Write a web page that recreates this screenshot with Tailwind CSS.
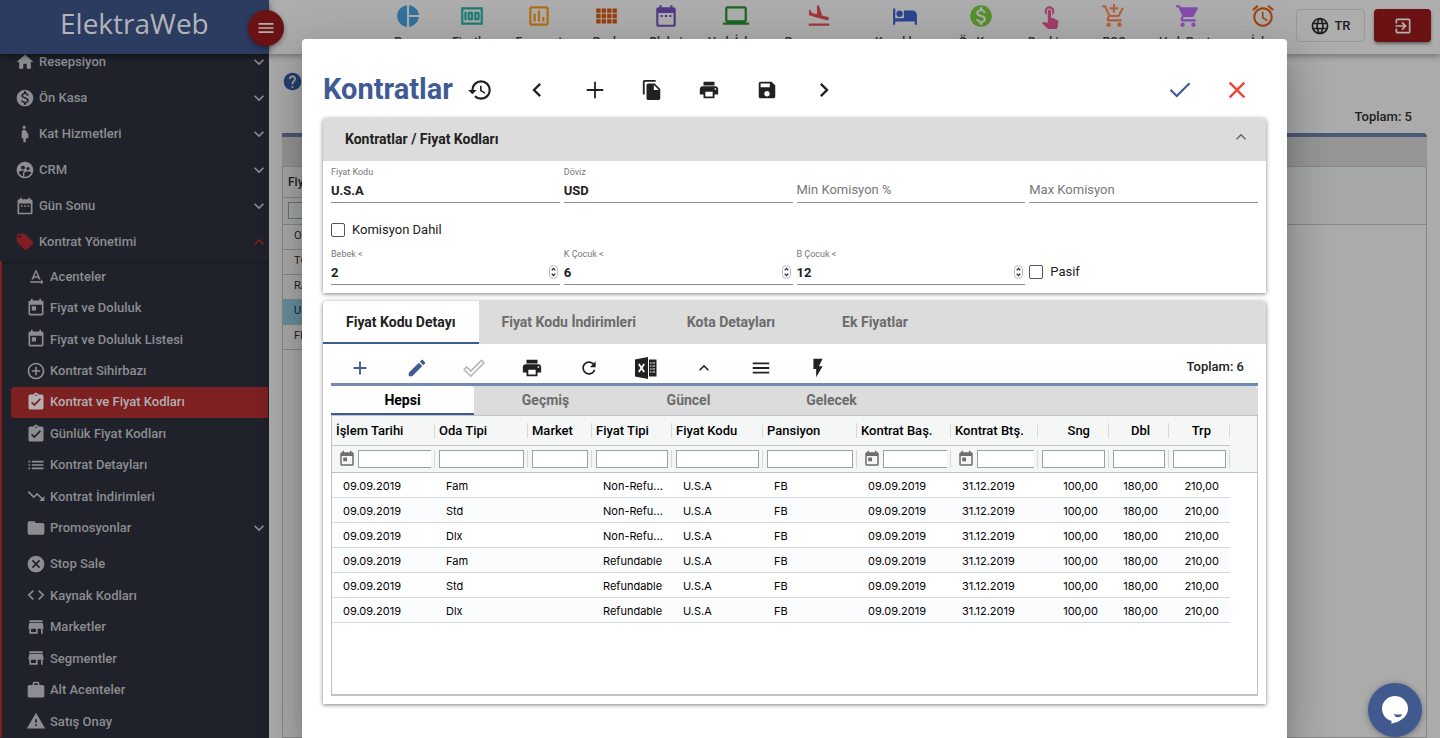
<!DOCTYPE html>
<html lang="tr">
<head>
<meta charset="utf-8">
<title>ElektraWeb - Kontratlar</title>
<meta name="viewport" content="width=device-width, initial-scale=1">
<script src="https://cdn.jsdelivr.net/npm/@tailwindcss/browser@4"></script>
</head>
<body class="relative h-screen overflow-hidden bg-[#ababab] font-['Roboto',sans-serif] text-[13px] text-[#212121]">

<!-- Icon library -->
<svg class="hidden" aria-hidden="true">
  <symbol id="i-home" viewBox="0 0 24 24"><path d="M10 20v-6h4v6h5v-8h3L12 3 2 12h3v8z"/></symbol>
  <symbol id="i-money" viewBox="0 0 24 24"><path d="M12 2C6.48 2 2 6.48 2 12s4.48 10 10 10 10-4.48 10-10S17.52 2 12 2zm1.41 16.09V20h-2.67v-1.93c-1.71-.36-3.16-1.46-3.27-3.4h1.96c.1 1.05.82 1.87 2.65 1.87 1.96 0 2.4-.98 2.4-1.59 0-.83-.44-1.61-2.67-2.14-2.48-.6-4.18-1.62-4.18-3.67 0-1.72 1.39-2.84 3.11-3.21V4h2.67v1.95c1.86.45 2.79 1.86 2.85 3.39H14.3c-.05-1.11-.64-1.87-2.22-1.87-1.5 0-2.4.68-2.4 1.64 0 .84.65 1.39 2.67 1.91s4.18 1.39 4.18 3.91c-.01 1.83-1.38 2.83-3.12 3.16z"/></symbol>
  <symbol id="i-woman" viewBox="0 0 24 24"><path d="M9 4c0-1.11.89-2 2-2s2 .89 2 2-.89 2-2 2-2-.89-2-2zm7 9c-.01-1.34-.83-2.51-2-3 0-1.66-1.34-3-3-3s-3 1.34-3 3v7h2v5h3v-5h3v-4z"/></symbol>
  <symbol id="i-users" viewBox="0 0 24 24"><path d="M11.99 2c-5.52 0-10 4.48-10 10s4.48 10 10 10 10-4.48 10-10-4.48-10-10-10zm3.61 6.34c1.07 0 1.93.86 1.93 1.93 0 1.07-.86 1.93-1.93 1.93-1.07 0-1.93-.86-1.93-1.93-.01-1.07.86-1.93 1.93-1.93zm-6-1.58c1.3 0 2.36 1.06 2.36 2.36 0 1.3-1.06 2.36-2.36 2.36s-2.36-1.06-2.36-2.36c0-1.31 1.05-2.36 2.36-2.36zm0 9.13v3.75c-2.4-.75-4.3-2.6-5.14-4.96 1.05-1.12 3.67-1.69 5.14-1.69.53 0 1.2.08 1.9.22-1.64.87-1.9 2.02-1.9 2.68zM11.99 20c-.27 0-.53-.01-.79-.04v-4.07c0-1.42 2.94-2.13 4.4-2.13 1.07 0 2.92.39 3.84 1.15-1.17 2.97-4.06 5.09-7.45 5.09z"/></symbol>
  <symbol id="i-range" viewBox="0 0 24 24"><path d="M9 11H7v2h2v-2zm4 0h-2v2h2v-2zm4 0h-2v2h2v-2zm2-7h-1V2h-2v2H8V2H6v2H5c-1.11 0-1.99.9-1.99 2L3 20c0 1.1.89 2 2 2h14c1.1 0 2-.9 2-2V6c0-1.1-.9-2-2-2zm0 16H5V9h14v11z"/></symbol>
  <symbol id="i-tag" viewBox="0 0 24 24"><path d="M21.41 11.58l-9-9C12.05 2.22 11.55 2 11 2H4c-1.1 0-2 .9-2 2v7c0 .55.22 1.05.59 1.42l9 9c.36.36.86.58 1.41.58.55 0 1.05-.22 1.41-.59l7-7c.37-.36.59-.86.59-1.41 0-.55-.23-1.06-.59-1.42zM5.5 7C4.67 7 4 6.33 4 5.5S4.67 4 5.5 4 7 4.67 7 5.5 6.33 7 5.5 7z"/></symbol>
  <symbol id="i-text" viewBox="0 0 24 24"><path d="M21 18l-3-3v2H5v2h13v2l3-3zM9.5 12.8h5l.9 2.2h2.1L12.75 4h-1.5L6.5 15h2.1l.9-2.2zM12 5.98L13.87 11h-3.74L12 5.98z"/></symbol>
  <symbol id="i-today" viewBox="0 0 24 24"><path d="M19 3h-1V1h-2v2H8V1H6v2H5c-1.11 0-1.99.9-1.99 2L3 19c0 1.1.89 2 2 2h14c1.1 0 2-.9 2-2V5c0-1.1-.9-2-2-2zm0 16H5V8h14v11zM7 10h5v5H7z"/></symbol>
  <symbol id="i-addcircle" viewBox="0 0 24 24"><path d="M13 7h-2v4H7v2h4v4h2v-4h4v-2h-4V7zm-1-5C6.48 2 2 6.48 2 12s4.48 10 10 10 10-4.48 10-10S17.52 2 12 2zm0 18c-4.41 0-8-3.59-8-8s3.59-8 8-8 8 3.59 8 8-3.59 8-8 8z"/></symbol>
  <symbol id="i-assign" viewBox="0 0 24 24"><path d="M19 3h-4.18C14.4 1.84 13.3 1 12 1c-1.3 0-2.4.84-2.82 2H5c-1.1 0-2 .9-2 2v14c0 1.1.9 2 2 2h14c1.1 0 2-.9 2-2V5c0-1.1-.9-2-2-2zm-7 0c.55 0 1 .45 1 1s-.45 1-1 1-1-.45-1-1 .45-1 1-1zm-2 14l-4-4 1.41-1.41L10 14.17l6.59-6.59L18 9l-8 8z"/></symbol>
  <symbol id="i-list" viewBox="0 0 24 24"><path d="M3 13h2v-2H3v2zm0 4h2v-2H3v2zm0-8h2V7H3v2zm4 4h14v-2H7v2zm0 4h14v-2H7v2zM7 7v2h14V7H7z"/></symbol>
  <symbol id="i-trend" viewBox="0 0 24 24"><path d="M16 18l2.29-2.29-4.88-4.88-4 4L2 7.41 3.41 6l6 6 4-4 6.3 6.29L22 12v6z"/></symbol>
  <symbol id="i-folder" viewBox="0 0 24 24"><path d="M10 4H4c-1.1 0-1.99.9-1.99 2L2 18c0 1.1.9 2 2 2h16c1.1 0 2-.9 2-2V8c0-1.1-.9-2-2-2h-8l-2-2z"/></symbol>
  <symbol id="i-cancel" viewBox="0 0 24 24"><path d="M12 2C6.47 2 2 6.47 2 12s4.47 10 10 10 10-4.47 10-10S17.53 2 12 2zm5 13.59L15.59 17 12 13.41 8.41 17 7 15.59 10.59 12 7 8.41 8.41 7 12 10.59 15.59 7 17 8.41 13.41 12 17 15.59z"/></symbol>
  <symbol id="i-code" viewBox="0 0 24 24"><path d="M9.4 16.6L4.8 12l4.6-4.6L8 6l-6 6 6 6 1.4-1.4zm5.2 0l4.6-4.6-4.6-4.6L16 6l6 6-6 6-1.4-1.4z"/></symbol>
  <symbol id="i-store" viewBox="0 0 24 24"><path d="M20 4H4v2h16V4zm1 10v-2l-1-5H4l-1 5v2h1v6h10v-6h4v6h2v-6h1zm-9 4H6v-4h6v4z"/></symbol>
  <symbol id="i-work" viewBox="0 0 24 24"><path d="M20 6h-4V4c0-1.11-.89-2-2-2h-4c-1.11 0-2 .89-2 2v2H4c-1.11 0-1.99.89-1.99 2L2 19c0 1.11.89 2 2 2h16c1.11 0 2-.89 2-2V8c0-1.11-.89-2-2-2zm-6 0h-4V4h4v2z"/></symbol>
  <symbol id="i-warn" viewBox="0 0 24 24"><path d="M1 21h22L12 2 1 21zm12-3h-2v-2h2v2zm0-4h-2v-4h2v4z"/></symbol>
  <symbol id="i-down" viewBox="0 0 24 24"><path d="M16.59 8.59L12 13.17 7.41 8.59 6 10l6 6 6-6z"/></symbol>
  <symbol id="i-up" viewBox="0 0 24 24"><path d="M12 8l-6 6 1.41 1.41L12 10.83l4.59 4.58L18 14z"/></symbol>
  <symbol id="i-menu" viewBox="0 0 24 24"><path d="M3 18h18v-2H3v2zm0-5h18v-2H3v2zm0-7v2h18V6H3z"/></symbol>
  <symbol id="i-print" viewBox="0 0 24 24"><path d="M19 8H5c-1.66 0-3 1.34-3 3v6h4v4h12v-4h4v-6c0-1.66-1.34-3-3-3zm-3 11H8v-5h8v5zm3-7c-.55 0-1-.45-1-1s.45-1 1-1 1 .45 1 1-.45 1-1 1zm-1-9H6v4h12V3z"/></symbol>
  <symbol id="i-spin" viewBox="0 0 9 14"><rect x=".5" y=".5" width="8" height="13" rx="4" fill="#fff" stroke="#bbb"/><path d="M2.7 5.4L4.5 3.4l1.8 2M2.7 8.6l1.8 2 1.8-2" fill="none" stroke="#222" stroke-width="1.2"/></symbol>
</svg>

<!-- Page behind the dialog -->
<div class="flex h-full">
  <aside class="flex w-[269px] shrink-0 flex-col bg-[#1f222b] text-[#8c8d90]">
    <header class="relative z-10 flex h-[54px] shrink-0 items-center bg-[#2c3b60] pb-2 pl-[60px] shadow-[0_2px_6px_rgba(0,0,0,0.5)]">
      <span class="font-['Open_Sans',sans-serif] text-[28px] leading-none font-medium text-[#b2b4b8]">ElektraWeb</span>
    </header>
    <nav class="-mt-[10px] font-medium">
      <ul class="[&>li>a]:flex [&>li>a]:h-9 [&>li>a]:items-center [&>li>a]:gap-1 [&>li>a]:pl-[15px] [&_svg]:size-5 [&_svg]:shrink-0 [&_svg]:fill-current">
        <li><a href="#"><svg><use href="#i-home"/></svg><span class="flex-1">Resepsiyon</span><svg><use href="#i-down"/></svg></a></li>
        <li><a href="#"><svg><use href="#i-money"/></svg><span class="flex-1">Ön Kasa</span><svg><use href="#i-down"/></svg></a></li>
        <li><a href="#"><svg><use href="#i-woman"/></svg><span class="flex-1">Kat Hizmetleri</span><svg><use href="#i-down"/></svg></a></li>
        <li><a href="#"><svg><use href="#i-users"/></svg><span class="flex-1">CRM</span><svg><use href="#i-down"/></svg></a></li>
        <li><a href="#"><svg><use href="#i-range"/></svg><span class="flex-1">Gün Sonu</span><svg><use href="#i-down"/></svg></a></li>
        <li><a href="#"><svg class="text-[#7f1f21]"><use href="#i-tag"/></svg><span class="flex-1">Kontrat Yönetimi</span><svg class="text-[#7f1f21]"><use href="#i-up"/></svg></a></li>
      </ul>
      <div class="mt-px border-l-2 border-[#7f1f21] shadow-[inset_0_3px_3px_rgba(0,0,0,0.15)] [&_a]:ml-[9px] [&_a]:flex [&_a]:items-center [&_a]:gap-1 [&_a]:pl-[15px] [&_svg]:size-5 [&_svg]:shrink-0 [&_svg]:fill-current">
        <ul class="grid h-[251px] auto-rows-fr [&_a]:h-full">
          <li><a href="#"><svg><use href="#i-text"/></svg>Acenteler</a></li>
          <li><a href="#"><svg><use href="#i-today"/></svg>Fiyat ve Doluluk</a></li>
          <li><a href="#"><svg><use href="#i-today"/></svg>Fiyat ve Doluluk Listesi</a></li>
          <li><a href="#"><svg><use href="#i-addcircle"/></svg>Kontrat Sihirbazı</a></li>
          <li><a href="#" aria-current="page" class="mr-px rounded-l bg-[#7c2022] text-[#b5b0b0]"><svg><use href="#i-assign"/></svg>Kontrat ve Fiyat Kodları</a></li>
          <li><a href="#"><svg><use href="#i-assign"/></svg>Günlük Fiyat Kodları</a></li>
          <li><a href="#"><svg><use href="#i-list"/></svg>Kontrat Detayları</a></li>
          <li><a href="#"><svg><use href="#i-trend"/></svg>Kontrat İndirimleri</a></li>
        </ul>
        <a href="#" class="h-9 pb-1"><svg><use href="#i-folder"/></svg><span class="flex-1">Promosyonlar</span><svg><use href="#i-down"/></svg></a>
        <ul class="grid h-[189px] auto-rows-fr [&_a]:h-full">
          <li><a href="#"><svg><use href="#i-cancel"/></svg>Stop Sale</a></li>
          <li><a href="#"><svg><use href="#i-code"/></svg>Kaynak Kodları</a></li>
          <li><a href="#"><svg><use href="#i-store"/></svg>Marketler</a></li>
          <li><a href="#"><svg><use href="#i-store"/></svg>Segmentler</a></li>
          <li><a href="#"><svg><use href="#i-work"/></svg>Alt Acenteler</a></li>
          <li><a href="#"><svg><use href="#i-warn"/></svg>Satış Onay</a></li>
        </ul>
      </div>
    </nav>
  </aside>

  <div class="flex min-w-0 flex-1 flex-col">
    <header class="flex h-[54px] shrink-0 items-start bg-[#adadad] pr-[9px] pl-[108px] shadow-[0_2px_6px_rgba(0,0,0,0.35)]">
      <nav class="flex flex-1 pt-[3px] text-center text-xs font-medium whitespace-nowrap text-[#2b2b2b] [&_a]:flex [&_a]:flex-col [&_a]:items-center [&_a]:gap-[5px] [&_svg]:size-[26px] [&_svg]:fill-current">
        <a href="#" class="w-[62px]"><svg viewBox="0 0 24 24" class="text-[#31719d]"><path d="M11 2v20c-5.07-.5-9-4.79-9-10s3.93-9.5 9-10zm2.03 0v8.99H22c-.47-4.74-4.24-8.52-8.97-8.99zm0 11.01V22c4.74-.47 8.5-4.25 8.97-8.99h-8.97z"/></svg>Pano</a>
        <a href="#" class="w-[66px]"><svg viewBox="0 0 24 24" class="text-[#1a7c76]"><path d="M5 8h2v8H5zm7 0H9c-.55 0-1 .45-1 1v6c0 .55.45 1 1 1h3c.55 0 1-.45 1-1V9c0-.55-.45-1-1-1zm-1 6h-1v-4h1v4zm7-6h-3c-.55 0-1 .45-1 1v6c0 .55.45 1 1 1h3c.55 0 1-.45 1-1V9c0-.55-.45-1-1-1zm-1 6h-1v-4h1v4zM2 4v16h20V4H2zm2 14V6h16v12H4z"/></svg>Fiyatlar</a>
        <a href="#" class="w-[68px]"><svg viewBox="0 0 24 24" class="text-[#b26c15]"><path d="M9 17H7v-7h2v7zm4 0h-2V7h2v10zm4 0h-2v-4h2v4zm2 2H5V5h14v14zm0-16H5c-1.1 0-2 .9-2 2v14c0 1.1.9 2 2 2h14c1.1 0 2-.9 2-2V5c0-1.1-.9-2-2-2z"/></svg>Forecast</a>
        <a href="#" class="w-[66px]"><svg viewBox="0 0 24 24" class="text-[#983e0c]"><path d="M3 9h4V5H3v4zm0 5h4v-4H3v4zm5 0h4v-4H8v4zm5 0h4v-4h-4v4zM8 9h4V5H8v4zm5-4v4h4V5h-4zm5 9h4v-4h-4v4zM3 19h4v-4H3v4zm5 0h4v-4H8v4zm5 0h4v-4h-4v4zm5 0h4v-4h-4v4zm0-14v4h4V5h-4z"/></svg>Rack</a>
        <a href="#" class="w-[54px]"><svg viewBox="0 0 24 24" class="text-[#523a86]"><use href="#i-range"/><path d="M4 5h16v4H4z"/></svg>Blokaj</a>
        <a href="#" class="w-[86px]"><svg viewBox="0 0 24 24" class="text-[#1d641f]"><path d="M20 18c1.1 0 1.99-.9 1.99-2L22 5c0-1.1-.9-2-2-2H4c-1.1 0-2 .9-2 2v11c0 1.1.9 2 2 2H0v2h24v-2h-4zM4 5h16v11H4V5z"/></svg>Hızlı İşlem</a>
        <a href="#" class="w-20"><svg viewBox="0 0 24 24" class="text-[#a0373b]"><path d="M2.5 19h19v2h-19zm7.18-5.73l4.35 1.16 5.31 1.42c.8.21 1.62-.26 1.84-1.06.21-.8-.26-1.62-1.06-1.84l-5.31-1.42-2.76-9.02L10.12 2v8.28L5.15 8.95l-.93-2.32-1.45-.39v5.17l1.6.43 5.31 1.43z"/></svg>Rezervasyon</a>
        <a href="#" class="w-[92px]"><svg viewBox="0 0 24 24" class="text-[#2a4690]"><path d="M7 13c1.66 0 3-1.34 3-3S8.66 7 7 7s-3 1.34-3 3 1.34 3 3 3zm12-6h-8v7H3V5H1v15h2v-3h18v3h2v-9c0-2.21-1.79-4-4-4z"/></svg>Konaklama</a>
        <a href="#" class="w-[60px]"><svg class="text-[#57902b]"><use href="#i-money"/></svg>Ön Kasa</a>
        <a href="#" class="w-[78px]"><svg viewBox="0 0 24 24" class="text-[#a0406b]"><path d="M9 11.24V7.5C9 6.12 10.12 5 11.5 5S14 6.12 14 7.5v3.74c1.21-.81 2-2.18 2-3.74C16 5.01 13.99 3 11.5 3S7 5.01 7 7.5c0 1.56.79 2.93 2 3.74zm9.84 4.63l-4.54-2.26c-.17-.07-.35-.11-.54-.11H13v-6c0-.83-.67-1.5-1.5-1.5S10 6.67 10 7.5v10.74l-3.43-.72c-.08-.01-.15-.03-.24-.03-.31 0-.59.13-.79.33l-.79.8 4.94 4.94c.27.27.65.44 1.06.44h6.79c.75 0 1.33-.55 1.44-1.28l.75-5.27c.01-.07.02-.14.02-.2 0-.62-.38-1.16-.91-1.38z"/></svg>Booking</a>
        <a href="#" class="w-[50px]"><svg viewBox="0 0 24 24" class="text-[#b4603d]"><path d="M11 9h2V6h3V4h-3V1h-2v3H8v2h3v3zm-4 9c-1.1 0-1.99.9-1.99 2S5.9 22 7 22s2-.9 2-2-.9-2-2-2zm10 0c-1.1 0-1.99.9-1.99 2s.89 2 1.99 2 2-.9 2-2-.9-2-2-2zm-9.83-3.25l.03-.12.9-1.63h7.45c.75 0 1.41-.41 1.75-1.03l3.86-7.01L19.42 4h-.01l-1.1 2-2.76 5H8.53l-.13-.27L6.16 6l-.95-2-.94-2H1v2h2l3.6 7.59-1.35 2.45c-.16.28-.25.61-.25.96 0 1.1.9 2 2 2h12v-2H7.42c-.13 0-.25-.11-.25-.25z"/></svg>POS</a>
        <a href="#" class="w-[98px]"><svg viewBox="0 0 24 24" class="text-[#854bb0]"><path d="M7 18c-1.1 0-1.99.9-1.99 2S5.9 22 7 22s2-.9 2-2-.9-2-2-2zM1 2v2h2l3.6 7.59-1.35 2.45c-.16.28-.25.61-.25.96 0 1.1.9 2 2 2h12v-2H7.42c-.14 0-.25-.11-.25-.25l.03-.12.9-1.63h7.45c.75 0 1.41-.41 1.75-1.03l3.58-6.49c.08-.14.12-.31.12-.48 0-.55-.45-1-1-1H5.21l-.94-2H1zm16 16c-1.1 0-1.99.9-1.99 2s.89 2 1.99 2 2-.9 2-2-.9-2-2-2z"/></svg>Hızlı Posta</a>
        <a href="#" class="w-[52px]"><svg viewBox="0 0 24 24" class="text-[#a14413]"><path d="M22 5.72l-4.6-3.86-1.29 1.53 4.6 3.86L22 5.72zM7.88 3.39L6.6 1.86 2 5.71l1.29 1.53 4.59-3.85zM12.5 8H11v6l4.75 2.85.75-1.23-4-2.37V8zM12 4c-4.97 0-9 4.03-9 9s4.02 9 9 9c4.97 0 9-4.03 9-9s-4.03-9-9-9zm0 16c-3.87 0-7-3.13-7-7s3.13-7 7-7 7 3.13 7 7-3.13 7-7 7z"/></svg>İşler</a>
      </nav>
      <div class="flex gap-[9px] pt-[9px]">
        <button class="flex h-[33px] w-[69px] items-center justify-center gap-1 rounded border border-[#989898] text-[13px] font-medium text-[#1d1d1d]"><svg viewBox="0 0 24 24" class="size-5 fill-current"><path d="M11.99 2C6.47 2 2 6.48 2 12s4.47 10 9.99 10C17.52 22 22 17.52 22 12S17.52 2 11.99 2zm6.93 6h-2.95c-.32-1.25-.78-2.45-1.38-3.56 1.84.63 3.37 1.91 4.33 3.56zM12 4.04c.83 1.2 1.48 2.53 1.91 3.96h-3.82c.43-1.43 1.08-2.76 1.91-3.96zM4.26 14C4.1 13.36 4 12.69 4 12s.1-1.36.26-2h3.38c-.08.66-.14 1.32-.14 2 0 .68.06 1.34.14 2H4.26zm.82 2h2.95c.32 1.25.78 2.45 1.38 3.56-1.84-.63-3.37-1.9-4.33-3.56zm2.95-8H5.08c.96-1.66 2.49-2.93 4.33-3.56C8.81 5.55 8.35 6.75 8.03 8zM12 19.96c-.83-1.2-1.48-2.53-1.91-3.96h3.82c-.43 1.43-1.08 2.76-1.91 3.96zM14.34 14H9.66c-.09-.66-.16-1.32-.16-2 0-.68.07-1.35.16-2h4.68c.09.65.16 1.32.16 2 0 .68-.07 1.34-.16 2zm.25 5.56c.6-1.11 1.06-2.31 1.38-3.56h2.95c-.96 1.65-2.49 2.93-4.33 3.56zM16.36 14c.08-.66.14-1.32.14-2 0-.68-.06-1.34-.14-2h3.38c.16.64.26 1.31.26 2s-.1 1.36-.26 2h-3.38z"/></svg>TR</button>
        <button aria-label="Çıkış" class="flex h-[33px] w-[57px] items-center justify-center rounded bg-[#6b1214] text-[#b5aeae] shadow-[0_2px_3px_rgba(0,0,0,0.4)]"><svg viewBox="0 0 24 24" class="size-5 fill-current"><path d="M10.09 15.59L11.5 17l5-5-5-5-1.41 1.41L12.67 11H3v2h9.67l-2.58 2.59zM19 3H5c-1.11 0-2 .9-2 2v4h2V5h14v14H5v-4H3v4c0 1.1.89 2 2 2h14c1.1 0 2-.9 2-2V5c0-1.1-.9-2-2-2z"/></svg></button>
      </div>
    </header>

    <main class="flex min-h-0 flex-1 flex-col px-[13px]">
      <div class="flex h-[79px] items-center justify-between">
        <button aria-label="Yardım" class="mb-6 text-[#273f70]"><svg viewBox="0 0 24 24" class="size-[21px] fill-current"><path d="M12 2C6.48 2 2 6.48 2 12s4.48 10 10 10 10-4.48 10-10S17.52 2 12 2zm1 17h-2v-2h2v2zm2.07-7.75l-.9.92C13.45 12.9 13 13.5 13 15h-2v-.5c0-1.1.45-2.1 1.17-2.83l1.24-1.26c.37-.36.59-.86.59-1.41 0-1.1-.9-2-2-2s-2 .9-2 2H8c0-2.21 1.79-4 4-4s4 1.79 4 4c0 .88-.36 1.68-.93 2.25z"/></svg></button>
        <p class="mt-[46px] mr-[15px] font-medium">Toplam: 5</p>
      </div>
      <div class="h-[33px] rounded-tr border-t-4 border-[#4c5a77] bg-[#969696]"></div>
      <div class="flex-1 border border-[#848889]">
        <table class="w-full table-fixed border-collapse text-left text-[11px] [&_tbody_td:first-child]:border-b [&_tbody_td:first-child]:border-[#848889] [&_tbody_td]:pl-[11px]">
          <colgroup><col class="w-40"><col></colgroup>
          <thead class="border-b border-[#848889] bg-[#a5a8a7]">
            <tr class="h-[30px]"><th scope="col" class="border-b border-[#848889] pl-[5px] text-xs font-medium">Fiyat Kodu</th><td></td></tr>
            <tr class="h-[27px]"><td class="pl-[5px]"><input aria-label="Fiyat Kodu filtresi" class="block h-[17px] w-20 border border-[#6a7474]"></td><td></td></tr>
          </thead>
          <tbody>
            <tr class="h-[25px]"><td>OTA</td><td></td></tr>
            <tr class="h-[25px]"><td>TO</td><td></td></tr>
            <tr class="h-[25px]"><td>RACK</td><td></td></tr>
            <tr class="h-[25px]"><td class="bg-[#67909f] text-[#0e1c33]">U.S.A</td><td></td></tr>
            <tr class="h-[25px]"><td>FIT</td><td></td></tr>
          </tbody>
        </table>
      </div>
    </main>
  </div>
</div>

<!-- Menu toggle, straddling the sidebar edge -->
<button aria-label="Menü" class="absolute top-[10px] left-[248px] z-10 flex size-9 items-center justify-center rounded-full bg-[#6b1214] text-[#b5aeae] shadow-[0_2px_5px_rgba(0,0,0,0.4)]"><svg class="size-5 fill-current"><use href="#i-menu"/></svg></button>

<!-- Dialog -->
<section role="dialog" aria-label="Kontratlar" class="absolute top-[39px] right-[153px] bottom-0 left-[302px] z-20 overflow-hidden rounded-t bg-white px-[21px] pt-6 shadow-[0_11px_15px_-7px_rgba(0,0,0,0.2),0_24px_38px_3px_rgba(0,0,0,0.14),0_9px_46px_8px_rgba(0,0,0,0.12)]">
  <div class="flex h-[55px] items-center pb-[2px] [&_button]:flex [&_button]:items-center [&_button]:justify-center [&_svg]:size-[22px] [&_svg]:fill-current">
    <h1 class="text-[29px] leading-none font-bold text-[#3f5b93]">Kontratlar</h1>
    <button aria-label="Geçmiş" class="ml-[14px]"><svg viewBox="0 2 24 20" class="size-[26px]!"><path d="M13.5 8H12v5l4.28 2.54.72-1.21-3.5-2.08V8M13 3a9 9 0 0 0-9 9H1l3.96 4.03L9 12H6a7 7 0 0 1 7-7 7 7 0 0 1 7 7 7 7 0 0 1-7 7c-1.93 0-3.68-.79-4.94-2.06l-1.42 1.42A8.9 8.9 0 0 0 13 21a9 9 0 0 0 9-9 9 9 0 0 0-9-9"/></svg></button>
    <div class="ml-4 flex w-[344px] [&_button]:flex-1">
      <button aria-label="Önceki"><svg viewBox="0 0 24 24" class="size-7!"><path d="M15.41 7.41L14 6l-6 6 6 6 1.41-1.41L10.83 12z"/></svg></button>
      <button aria-label="Yeni"><svg viewBox="0 0 24 24" class="fill-none! stroke-current stroke-2"><path d="M3 12h18M12 3v18"/></svg></button>
      <button aria-label="Kopyala"><svg viewBox="0 0 24 24"><path d="M16 1H4c-1.1 0-2 .9-2 2v14h2V3h12V1zm-1 4l6 6v10c0 1.1-.9 2-2 2H7.99C6.89 23 6 22.1 6 21l.01-14c0-1.1.89-2 1.99-2h7zm-1 7h5.5L14 6.5V12z"/></svg></button>
      <button aria-label="Yazdır"><svg><use href="#i-print"/></svg></button>
      <button aria-label="Kaydet"><svg viewBox="0 0 24 24"><path d="M17 3H5c-1.11 0-2 .9-2 2v14c0 1.1.89 2 2 2h14c1.1 0 2-.9 2-2V7l-4-4zm-5 16c-1.66 0-3-1.34-3-3s1.34-3 3-3 3 1.34 3 3-1.34 3-3 3zm3-10H5V5h10v4z"/></svg></button>
      <button aria-label="Sonraki"><svg viewBox="0 0 24 24" class="size-7!"><path d="M10 6L8.59 7.41 13.17 12l-4.58 4.59L10 18l6-6z"/></svg></button>
    </div>
    <div class="mr-px ml-auto flex [&_button]:w-[57px]">
      <button aria-label="Tamam" class="text-[#3f5b93]"><svg viewBox="0 0 24 24" class="size-[26px]!"><path d="M9 16.2L3.9 11.1 2.5 12.5l6.5 6.5L21.5 6.5 20.1 5.1z"/></svg></button>
      <button aria-label="Kapat" class="text-[#f44336]"><svg viewBox="0 0 24 24" class="size-7!"><path d="M19 6.41L17.59 5 12 10.59 6.41 5 5 6.41 10.59 12 5 17.59 6.41 19 12 13.41 17.59 19 19 17.59 13.41 12z"/></svg></button>
    </div>
  </div>

  <!-- Price code form -->
  <form class="rounded-t bg-white shadow-[0_1px_4px_rgba(0,0,0,0.5)]">
    <div class="flex h-[43px] items-center justify-between rounded-t bg-[#dcdcdc] pr-4 pb-px pl-[22px]">
      <h2 class="text-sm font-bold">Kontratlar / Fiyat Kodları</h2>
      <button type="button" aria-label="Daralt" class="pb-1 text-[#666]"><svg viewBox="0 0 24 24" class="size-[18px] fill-none stroke-current stroke-2"><path d="M6 15l6-6 6 6"/></svg></button>
    </div>
    <div class="px-2 pb-2 [&_input:not([type=checkbox])]:w-full [&_input:not([type=checkbox])]:font-bold [&_input:not([type=checkbox])]:outline-none [&_label]:text-[9px] [&_label]:text-[#777]">
      <div class="grid grid-cols-4 gap-1">
        <div class="flex h-[42px] flex-col border-b border-[#8c8c8c] pt-1 leading-[14px]"><label for="kod">Fiyat Kodu</label><input id="kod" value="U.S.A" class="mt-[2px] h-[18px]"></div>
        <div class="flex h-[42px] flex-col border-b border-[#8c8c8c] pt-1 leading-[14px]"><label for="doviz">Döviz</label><input id="doviz" value="USD" class="mt-[2px] h-[18px]"></div>
        <div class="flex h-[42px] flex-col justify-end border-b border-[#8c8c8c] pb-[3px]"><input aria-label="Min Komisyon %" placeholder="Min Komisyon %" class="h-[18px] placeholder:font-normal placeholder:text-[#777]"></div>
        <div class="flex h-[42px] flex-col justify-end border-b border-[#8c8c8c] pb-[3px]"><input aria-label="Max Komisyon" placeholder="Max Komisyon" class="h-[18px] placeholder:font-normal placeholder:text-[#777]"></div>
      </div>
      <div class="flex h-10 items-end gap-[7px] pb-[6px]">
        <input id="dahil" type="checkbox" class="size-[14px] appearance-none rounded-[2px] border border-[#555] checked:bg-[#3f5b93]">
        <label for="dahil" class="text-[13px]! leading-[14px] text-[#212121]!">Komisyon Dahil</label>
      </div>
      <div class="grid grid-cols-4 gap-1 [&_input[type=number]]:[appearance:textfield]">
        <div class="flex h-[42px] flex-col border-b border-[#8c8c8c] pt-1 leading-[14px]"><label for="bebek">Bebek &lt;</label><span class="mt-[2px] flex items-center pr-[2px]"><input id="bebek" type="number" value="2" class="h-[18px]"><svg class="h-[14px] w-[9px] shrink-0"><use href="#i-spin"/></svg></span></div>
        <div class="flex h-[42px] flex-col border-b border-[#8c8c8c] pt-1 leading-[14px]"><label for="kcocuk">K Çocuk &lt;</label><span class="mt-[2px] flex items-center pr-[2px]"><input id="kcocuk" type="number" value="6" class="h-[18px]"><svg class="h-[14px] w-[9px] shrink-0"><use href="#i-spin"/></svg></span></div>
        <div class="flex h-[42px] flex-col border-b border-[#8c8c8c] pt-1 leading-[14px]"><label for="bcocuk">B Çocuk &lt;</label><span class="mt-[2px] flex items-center pr-[2px]"><input id="bcocuk" type="number" value="12" class="h-[18px]"><svg class="h-[14px] w-[9px] shrink-0"><use href="#i-spin"/></svg></span></div>
        <div class="flex h-[42px] items-end gap-[7px] pb-[6px]">
          <input id="pasif" type="checkbox" class="size-[14px] appearance-none rounded-[2px] border border-[#555] checked:bg-[#3f5b93]">
          <label for="pasif" class="text-[13px]! leading-[14px] text-[#212121]!">Pasif</label>
        </div>
      </div>
    </div>
  </form>

  <!-- Price code details -->
  <div class="mt-2 rounded-t bg-white pb-2 shadow-[0_1px_4px_rgba(0,0,0,0.5)]">
    <div role="tablist" class="flex h-[43px] overflow-hidden rounded-t bg-[#dcdcdc] text-sm font-bold text-[#6b6b6b] [&_button]:min-w-[144px] [&_button]:border-b-2 [&_button]:border-transparent [&_button]:px-[23px]">
      <button role="tab" aria-selected="true" class="border-[#3f5b93]! bg-white text-[#212121]">Fiyat Kodu Detayı</button>
      <button role="tab">Fiyat Kodu İndirimleri</button>
      <button role="tab">Kota Detayları</button>
      <button role="tab">Ek Fiyatlar</button>
    </div>
    <div class="px-2">
      <div class="flex h-[42px] items-center justify-between border-b-3 border-[#7389b5] pt-2">
        <div class="flex w-[516px] [&_button]:flex [&_button]:flex-1 [&_button]:items-center [&_button]:justify-center [&_svg]:size-5 [&_svg]:fill-current">
          <button aria-label="Ekle" class="text-[#3f5b93]"><svg viewBox="0 0 24 24" class="size-[22px]!"><path d="M19 13h-6v6h-2v-6H5v-2h6V5h2v6h6v2z"/></svg></button>
          <button aria-label="Düzenle" class="text-[#3f5b93]"><svg viewBox="0 0 24 24" class="size-[22px]!"><path d="M3 17.25V21h3.75L17.81 9.94l-3.75-3.75L3 17.25zM20.71 7.04c.39-.39.39-1.02 0-1.41l-2.34-2.34c-.39-.39-1.02-.39-1.41 0l-1.83 1.83 3.75 3.75 1.83-1.83z"/></svg></button>
          <button aria-label="Onayla" class="text-[#b5b5b5]"><svg viewBox="0 0 24 20" class="h-5! w-6! fill-none! stroke-current stroke-[1.5]"><path d="M2 11.5l2.600-2.600 4.200 4.200L19.500 2.400 22 4.900 8.800 18.200z"/></svg></button>
          <button aria-label="Yazdır"><svg class="size-[22px]!"><use href="#i-print"/></svg></button>
          <button aria-label="Yenile"><svg viewBox="0 0 24 24"><path d="M17.65 6.35C16.2 4.9 14.21 4 12 4c-4.42 0-7.99 3.58-7.99 8s3.57 8 7.99 8c3.73 0 6.84-2.55 7.73-6h-2.08c-.82 2.33-3.04 4-5.65 4-3.31 0-6-2.69-6-6s2.69-6 6-6c1.66 0 3.14.69 4.22 1.78L13 11h7V4l-2.35 2.35z"/></svg></button>
          <button aria-label="Excel"><svg viewBox="0 0 22 22" class="size-[22px]!"><path d="M0 2.500L13 0v22L0 19.500z"/><path d="M14 2.500h7.500v17H14z"/><path d="M15 6h1.500M15 9h1.500M15 12h1.500M15 15h1.500M17.500 6H20M17.500 9H20M17.500 12H20M17.500 15H20" fill="none" stroke="#fff" stroke-width="1.200"/><path d="M3.800 7l5.400 8M9.200 7l-5.400 8" fill="none" stroke="#fff" stroke-width="1.800"/></svg></button>
          <button aria-label="Daralt"><svg><use href="#i-up"/></svg></button>
          <button aria-label="Menü"><svg class="size-[22px]!"><use href="#i-menu"/></svg></button>
          <button aria-label="Hızlı işlem"><svg viewBox="0 0 24 24" class="size-[22px]!"><path d="M7 2v11h3v9l7-12h-4l4-8z"/></svg></button>
        </div>
        <p class="mr-[14px] mb-[2px] font-medium">Toplam: 6</p>
      </div>
      <div role="tablist" class="flex h-[29px] rounded-t bg-[#dcdcdc] text-sm font-bold text-[#6b6b6b] [&_button]:w-[143px] [&_button]:border-b-2 [&_button]:border-transparent">
        <button role="tab" aria-selected="true" class="rounded-t border-[#3f5b93]! bg-white text-black">Hepsi</button>
        <button role="tab">Geçmiş</button>
        <button role="tab">Güncel</button>
        <button role="tab">Gelecek</button>
      </div>
      <div class="min-h-[281px] border border-b-2 border-[#bdc3c7]">
        <table class="w-full table-fixed border-separate border-spacing-0 text-left font-['Inter',sans-serif] text-[11px] text-black [&_input]:block [&_input]:h-[18px] [&_input]:w-full [&_input]:min-w-0 [&_input]:border [&_input]:border-[#95a5a6] [&_input]:bg-white">
          <colgroup><col class="w-[103px]"><col class="w-[93px]"><col class="w-16"><col class="w-20"><col class="w-[91px]"><col class="w-[94px]"><col class="w-[94px]"><col class="w-[87px]"><col class="w-[71px]"><col class="w-[60px]"><col class="w-[61px]"><col></colgroup>
          <thead class="bg-[#f5f7f7]">
            <tr class="h-[30px] font-['Roboto',sans-serif] text-[13px] [&_div]:h-[15px] [&_div]:border-r [&_div]:border-[#d5dadd] [&_div]:leading-[15px] [&_div]:whitespace-nowrap [&_th]:border-b [&_th]:border-[#bdc3c7] [&_th]:pl-1 [&_th]:font-medium">
              <th scope="col"><div>İşlem Tarihi</div></th><th scope="col"><div>Oda Tipi</div></th><th scope="col"><div>Market</div></th><th scope="col"><div>Fiyat Tipi</div></th><th scope="col"><div>Fiyat Kodu</div></th><th scope="col"><div>Pansiyon</div></th><th scope="col"><div>Kontrat Baş.</div></th><th scope="col"><div>Kontrat Btş.</div></th><th scope="col" class="text-right"><div class="pr-[18px]">Sng</div></th><th scope="col" class="text-right"><div class="pr-[18px]">Dbl</div></th><th scope="col" class="text-right"><div class="pr-[18px]">Trp</div></th><td></td>
            </tr>
            <tr class="h-[27px] [&_div]:flex [&_div]:h-[18px] [&_div]:items-center [&_div]:gap-[2px] [&_div]:border-r [&_div]:border-[#d5dadd] [&_div]:pr-[3px] [&_svg]:size-[18px] [&_svg]:shrink-0 [&_svg]:fill-[#6b6f70] [&_td]:border-b [&_td]:border-[#bdc3c7] [&_td]:pl-1">
              <td><div class="pl-[2px]"><svg><use href="#i-today"/></svg><input aria-label="İşlem Tarihi filtresi" class="border-r-0!"></div></td>
              <td><div><input aria-label="Oda Tipi filtresi"></div></td>
              <td><div><input aria-label="Market filtresi"></div></td>
              <td><div><input aria-label="Fiyat Tipi filtresi"></div></td>
              <td><div><input aria-label="Fiyat Kodu filtresi"></div></td>
              <td><div><input aria-label="Pansiyon filtresi"></div></td>
              <td><div class="pl-[2px]"><svg><use href="#i-today"/></svg><input aria-label="Kontrat başlangıç filtresi" class="border-r-0!"></div></td>
              <td><div class="pl-[2px]"><svg><use href="#i-today"/></svg><input aria-label="Kontrat bitiş filtresi" class="border-r-0!"></div></td>
              <td><div><input aria-label="Sng filtresi"></div></td>
              <td><div><input aria-label="Dbl filtresi"></div></td>
              <td><div><input aria-label="Trp filtresi"></div></td>
              <td></td>
            </tr>
          </thead>
          <tbody class="[&_td]:pt-[3px] [&_td]:pl-[11px] [&_td]:whitespace-nowrap [&_td:not(:last-child)]:border-b [&_td:not(:last-child)]:border-[#d5dadd] [&_td:nth-child(n+9)]:pr-[11px] [&_td:nth-child(n+9)]:text-right [&_tr]:h-[25px] [&_tr:nth-child(even)>td:not(:last-child)]:bg-[#fbfcfe]">
            <tr><td>09.09.2019</td><td>Fam</td><td></td><td>Non-Refu...</td><td>U.S.A</td><td>FB</td><td>09.09.2019</td><td>31.12.2019</td><td>100,00</td><td>180,00</td><td>210,00</td><td></td></tr>
            <tr><td>09.09.2019</td><td>Std</td><td></td><td>Non-Refu...</td><td>U.S.A</td><td>FB</td><td>09.09.2019</td><td>31.12.2019</td><td>100,00</td><td>180,00</td><td>210,00</td><td></td></tr>
            <tr><td>09.09.2019</td><td>Dlx</td><td></td><td>Non-Refu...</td><td>U.S.A</td><td>FB</td><td>09.09.2019</td><td>31.12.2019</td><td>100,00</td><td>180,00</td><td>210,00</td><td></td></tr>
            <tr><td>09.09.2019</td><td>Fam</td><td></td><td>Refundable</td><td>U.S.A</td><td>FB</td><td>09.09.2019</td><td>31.12.2019</td><td>100,00</td><td>180,00</td><td>210,00</td><td></td></tr>
            <tr><td>09.09.2019</td><td>Std</td><td></td><td>Refundable</td><td>U.S.A</td><td>FB</td><td>09.09.2019</td><td>31.12.2019</td><td>100,00</td><td>180,00</td><td>210,00</td><td></td></tr>
            <tr><td>09.09.2019</td><td>Dlx</td><td></td><td>Refundable</td><td>U.S.A</td><td>FB</td><td>09.09.2019</td><td>31.12.2019</td><td>100,00</td><td>180,00</td><td>210,00</td><td></td></tr>
          </tbody>
        </table>
      </div>
    </div>
  </div>
</section>

<!-- Chat launcher -->
<button aria-label="Sohbet" class="absolute right-[18px] bottom-px z-30 flex size-[54px] items-center justify-center rounded-full bg-[#40598f] shadow-[0_1px_6px_rgba(0,0,0,0.35)]"><svg viewBox="0 0 26 28" class="h-7 w-[26px]"><path fill="#fff" d="M13 0a13 12.5 0 0 1 13 12.5c0 7-6 13-17 15.3.6-1 .8-2 .4-3C4 23.5 0 18.5 0 12.5A13 12.5 0 0 1 13 0z"/><path fill="#40598f" d="M12 18c2.6.8 5.4.8 8 0-.5 2.2-2 3.300-4 3.300s-3.500-1.100-4-3.300z"/></svg></button>

</body>
</html>
